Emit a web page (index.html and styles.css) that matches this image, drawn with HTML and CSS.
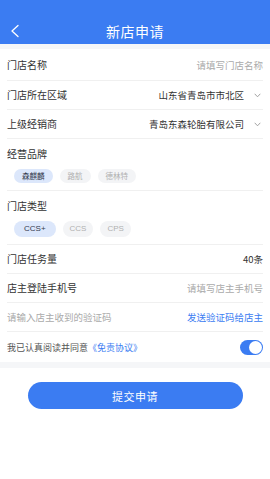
FILE: index.html
```html
<!DOCTYPE html>
<html lang="zh-CN">
<head>
    <meta charset="UTF-8">
    <meta name="viewport" content="width=device-width, initial-scale=1.0">
    <title>新店申请</title>
    <link rel="stylesheet" href="styles.css">
</head>
<body>
    <div class="cabecalho">
        <a class="voltar">
            <svg width="10" height="14" viewBox="0 0 10 14"><polyline points="8,1.5 2,7 8,12.5" fill="none" stroke="#fff" stroke-width="1.3" stroke-linecap="round" stroke-linejoin="round"/></svg>
        </a>
        <h1 class="titulo">新店申请</h1>
    </div>

    <div class="formulario">
        <div class="linha linha-primeira">
            <span class="rotulo">门店名称</span>
            <span class="dica">请填写门店名称</span>
        </div>
        <div class="linha">
            <span class="rotulo">门店所在区域</span>
            <span class="valor">山东省青岛市市北区
                <svg class="seta" width="7" height="5" viewBox="0 0 7 5"><polyline points="0.7,0.8 3.5,3.8 6.3,0.8" fill="none" stroke="#999" stroke-width="0.9"/></svg>
            </span>
        </div>
        <div class="linha">
            <span class="rotulo">上级经销商</span>
            <span class="valor">青岛东森轮胎有限公司
                <svg class="seta" width="7" height="5" viewBox="0 0 7 5"><polyline points="0.7,0.8 3.5,3.8 6.3,0.8" fill="none" stroke="#999" stroke-width="0.9"/></svg>
            </span>
        </div>
        <div class="bloco">
            <span class="rotulo">经营品牌</span>
            <ul class="opcoes opcoes-marca">
                <li class="selecionado">森麒麟</li>
                <li>路航</li>
                <li>德林特</li>
            </ul>
        </div>
        <div class="bloco bloco-tipo">
            <span class="rotulo">门店类型</span>
            <ul class="opcoes opcoes-tipo">
                <li class="selecionado">CCS+</li>
                <li>CCS</li>
                <li>CPS</li>
            </ul>
        </div>
        <div class="linha">
            <span class="rotulo">门店任务量</span>
            <span class="valor">40条</span>
        </div>
        <div class="linha">
            <span class="rotulo">店主登陆手机号</span>
            <span class="dica">请填写店主手机号</span>
        </div>
        <div class="linha">
            <span class="dica">请输入店主收到的验证码</span>
            <span class="link">发送验证码给店主</span>
        </div>
        <div class="linha linha-acordo">
            <span class="acordo">我已认真阅读并同意<span class="link">《免责协议》</span></span>
            <span class="chave"><span class="bolinha"></span></span>
        </div>
    </div>

    <div class="rodape">
        <a class="botao">提交申请</a>
    </div>
</body>
</html>
```

FILE: styles.css
```css
*{
    box-sizing: border-box;
    font-family: "Noto Sans CJK SC", "Noto Sans", sans-serif;
}
body{
    margin: 0;
    background-color: #f5f6f8;
}

.cabecalho{
    position: relative;
    height: 44px;
    padding-top: 18px;
    background-color: #3b7cf2;
    display: flex;
    align-items: center;
    justify-content: center;
}
.voltar{
    position: absolute;
    left: 10px;
    top: 24px;
    display: flex;
}
.titulo{
    margin: 0;
    color: #ffffff;
    font-size: 14px;
    font-weight: 400;
    line-height: 18px;
    letter-spacing: 0.5px;
}

.formulario{
    margin-top: 5px;
    background-color: #ffffff;
    padding: 0 7px;
}
.linha{
    display: flex;
    align-items: center;
    justify-content: space-between;
    height: 29px;
    border-bottom: 1px solid #f0f0f0;
}
.linha-primeira{
    height: 32px;
}
.linha-acordo{
    height: 30px;
    border-bottom: none;
}
.rotulo{
    font-size: 10px;
    color: #333333;
    line-height: 14px;
}
.dica{
    font-size: 9.5px;
    color: #aaaaaa;
}
.valor{
    font-size: 9.5px;
    color: #333333;
    display: flex;
    align-items: center;
}
.seta{
    margin-left: 10px;
    margin-right: 2px;
}
.link{
    font-size: 9.5px;
    color: #3b7cf2;
}
.acordo{
    font-size: 9px;
    color: #555555;
}
.acordo .link{
    font-size: 9px;
}

.bloco{
    display: flex;
    flex-direction: column;
    align-items: flex-start;
    padding: 8px 0 7px;
    border-bottom: 1px solid #f0f0f0;
}
.opcoes{
    list-style: none;
    margin: 8px 0 0 7px;
    padding: 0;
    display: flex;
    gap: 7px;
}
.opcoes li{
    background-color: #f3f4f6;
    color: #b0b0b0;
    font-size: 7.5px;
    border-radius: 8px;
    text-align: center;
}
.opcoes-marca li{
    height: 14px;
    line-height: 14px;
    padding: 0 8px;
}
.opcoes-tipo li{
    height: 16px;
    line-height: 16px;
    padding: 0 7px;
    font-family: "Liberation Sans", sans-serif;
    font-size: 8px;
}
.opcoes-tipo li.selecionado{
    padding: 0 10px;
}
.opcoes li.selecionado{
    background-color: #dce7fb;
    color: #333a4d;
}

.chave{
    width: 23px;
    height: 15px;
    border-radius: 8px;
    background-color: #3b7cf2;
    display: flex;
    align-items: center;
    justify-content: flex-end;
    padding-right: 1px;
}
.bolinha{
    width: 13px;
    height: 13px;
    border-radius: 50%;
    background-color: #ffffff;
}

.rodape{
    margin-top: 6px;
    background-color: #ffffff;
    min-height: 120px;
    padding-top: 14px;
    display: flex;
    justify-content: center;
    align-items: flex-start;
}
.botao{
    width: 215px;
    height: 27px;
    border-radius: 14px;
    background-color: #3b7cf2;
    color: #ffffff;
    font-size: 11px;
    display: flex;
    align-items: center;
    justify-content: center;
    letter-spacing: 0.5px;
}
```
